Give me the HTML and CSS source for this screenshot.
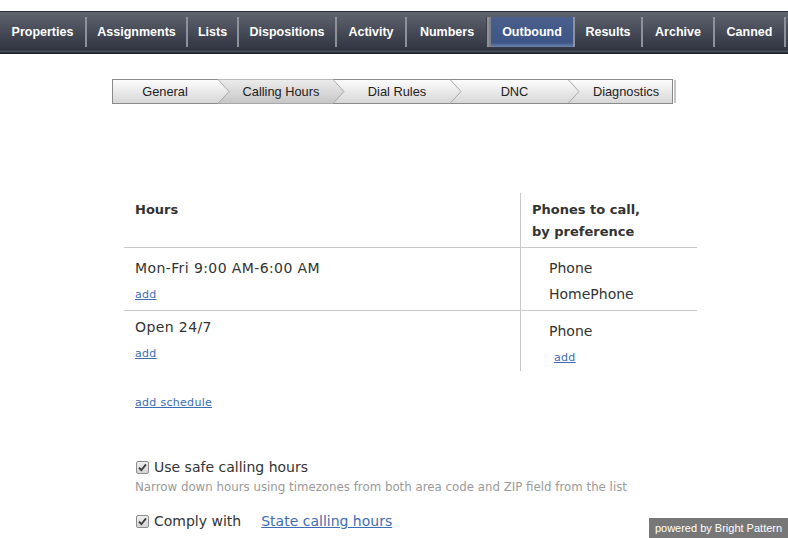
FILE: index.html
```html
<!DOCTYPE html>
<html>
<head>
<meta charset="utf-8">
<link rel="stylesheet" href="styles.css">
</head>
<body>
<div class="topnav">
  <ul class="tabs">
    <li class="tab t-prop">Properties</li>
    <li class="tab t-asg">Assignments</li>
    <li class="tab t-lists">Lists</li>
    <li class="tab t-disp">Dispositions</li>
    <li class="tab t-act">Activity</li>
    <li class="tab t-num">Numbers</li>
    <li class="tab t-out active">Outbound</li>
    <li class="tab t-res">Results</li>
    <li class="tab t-arch">Archive</li>
    <li class="tab t-can">Canned</li>
  </ul>
</div>

<div class="wizard">
  <svg class="wizard-bg" width="564" height="26" viewBox="0 0 564 26">
    <defs>
      <linearGradient id="lg" x1="0" y1="0" x2="0" y2="1">
        <stop offset="0" stop-color="#fdfdfd"/>
        <stop offset="1" stop-color="#d6d6d6"/>
      </linearGradient>
      <linearGradient id="dg" x1="0" y1="0" x2="0" y2="1">
        <stop offset="0" stop-color="#ececec"/>
        <stop offset="1" stop-color="#c6c6c6"/>
      </linearGradient>
    </defs>
    <rect x="0.5" y="0.5" width="560" height="24" fill="url(#lg)" stroke="#8a8a8a"/>
    <polygon points="106,0.5 221,0.5 232,12.5 221,24.5 106,24.5 117,12.5" fill="url(#dg)"/>
    <polyline points="106,0.5 117,12.5 106,24.5" fill="none" stroke="#a8a8a8"/>
    <polyline points="221,0.5 232,12.5 221,24.5" fill="none" stroke="#a8a8a8"/>
    <polyline points="338,0.5 349,12.5 338,24.5" fill="none" stroke="#a8a8a8"/>
    <polyline points="456,0.5 467,12.5 456,24.5" fill="none" stroke="#a8a8a8"/>
    <line x1="563" y1="1" x2="563" y2="24" stroke="#8a8a8a"/>
  </svg>
  <div class="wizard-steps">
    <span class="step s1">General</span>
    <span class="step s2">Calling Hours</span>
    <span class="step s3">Dial Rules</span>
    <span class="step s4">DNC</span>
    <span class="step s5">Diagnostics</span>
  </div>
</div>

<div class="sched">
  <div class="cell head left">Hours</div>
  <div class="cell head right">Phones to call,<br>by preference</div>

  <div class="cell row1 left">
    <div class="line spaced">Mon-Fri 9:00 AM-6:00 AM</div>
    <div class="line addline"><a class="link small" href="#">add</a></div>
  </div>
  <div class="cell row1 right body-right">
    <div class="line">Phone</div>
    <div class="line">HomePhone</div>
  </div>

  <div class="cell row2 left last">
    <div class="line spaced">Open 24/7</div>
    <div class="line addline"><a class="link small" href="#">add</a></div>
  </div>
  <div class="cell row2 right body-right last r2">
    <div class="line">Phone</div>
    <div class="line addline"><a class="link small addphone" href="#">add</a></div>
  </div>
</div>

<div class="addsched"><a class="link small" href="#">add schedule</a></div>

<div class="options">
  <div class="opt">
    <svg class="cb" width="13" height="13" viewBox="0 0 13 13">
      <defs>
        <linearGradient id="cbg" x1="0" y1="0" x2="0" y2="1">
          <stop offset="0" stop-color="#f0f0f0"/>
          <stop offset="1" stop-color="#d2d2d2"/>
        </linearGradient>
      </defs>
      <rect x="0.5" y="0.5" width="12" height="12" rx="1.5" fill="url(#cbg)" stroke="#8e8e8e"/>
      <path d="M3 6.6 L5.3 9.2 L10 3.4" fill="none" stroke="#3a3a3a" stroke-width="1.8"/>
    </svg>
    <span class="optlabel">Use safe calling hours</span>
  </div>
  <div class="hint">Narrow down hours using timezones from both area code and ZIP field from the list</div>
  <div class="opt opt2">
    <svg class="cb" width="13" height="13" viewBox="0 0 13 13">
      <rect x="0.5" y="0.5" width="12" height="12" rx="1.5" fill="url(#cbg)" stroke="#8e8e8e"/>
      <path d="M3 6.6 L5.3 9.2 L10 3.4" fill="none" stroke="#3a3a3a" stroke-width="1.8"/>
    </svg>
    <span class="optlabel">Comply with</span>
    <a class="link biglink" href="#">State calling hours</a>
  </div>
</div>

<div class="powered">powered by Bright Pattern</div>
</body>
</html>
```

FILE: styles.css
```css
html, body {
  margin: 0;
  padding: 0;
  background: #ffffff;
}

body {
  font-family: "DejaVu Sans", Verdana, sans-serif;
  color: #333333;
  width: 788px;
  height: 538px;
  overflow: hidden;
}

.topnav {
  margin-top: 11px;
  height: 41px;
  border-top: 1px solid #2b2f37;
  border-bottom: 1px solid #1c1f25;
  background: linear-gradient(#5e636e 0%, #454a56 50%, #303541 92%, #4a4e57 96%, #262a31 100%);
  display: flex;
  align-items: flex-start;
}

.tabs {
  list-style: none;
  margin: 0;
  padding: 0;
  display: flex;
  padding-top: 5px;
}

.tab {
  box-sizing: border-box;
  height: 30px;
  display: flex;
  align-items: center;
  justify-content: center;
  border-right: 2px solid #8d9198;
  color: #ffffff;
  font-family: "Liberation Sans", Arial, sans-serif;
  font-weight: bold;
  font-size: 12.5px;
  padding-bottom: 1px;
}

.t-prop { width: 87px; }
.t-asg { width: 101px; }
.t-lists { width: 51px; }
.t-disp { width: 98px; }
.t-act { width: 70px; }
.t-num { width: 82px; box-shadow: inset -1px 0 0 #3a3f4a; }
.t-out { width: 86px; }
.t-res { width: 68px; }
.t-arch { width: 72px; }
.t-can { width: 71px; }

.tab.active {
  background: linear-gradient(#4a5f8c, #3c5687 85%, #6d84b0 100%);
  border-left: 2px solid #7d828a;
}

.wizard {
  position: relative;
  margin-left: 112px;
  margin-top: 25px;
  width: 564px;
  height: 25px;
}

.wizard-bg {
  position: absolute;
  left: 0;
  top: 0;
}

.wizard-steps {
  position: relative;
  display: flex;
  gap: 11px;
  height: 25px;
  align-items: center;
  font-family: "Liberation Sans", Arial, sans-serif;
  font-size: 12.8px;
  color: #222222;
}

.step {
  text-align: center;
}

.s1 { width: 106px; }
.s2 { width: 104px; }
.s3 { width: 106px; }
.s4 { width: 107px; }
.s5 { width: 94px; }

.sched {
  margin-left: 124px;
  margin-top: 89px;
  width: 573px;
  display: grid;
  grid-template-columns: 396px 177px;
}

.cell {
  box-sizing: border-box;
  border-bottom: 1px solid #c9c9c9;
}

.cell.last {
  border-bottom: none;
}

.cell.right {
  border-left: 1px solid #c9c9c9;
}

.head {
  font-weight: bold;
  font-size: 13px;
  line-height: 22px;
  padding: 6px 0 4px 11px;
  color: #333333;
}

.line {
  font-size: 14px;
  line-height: 26px;
  height: 26px;
  white-space: nowrap;
}

.line.spaced {
  letter-spacing: 0.4px;
}

.line.addline {
  font-size: 11px;
  line-height: 28px;
}

.row1 {
  padding: 7px 0 3px 11px;
}

.row2 {
  padding: 3px 0 5px 11px;
}

.body-right {
  padding-left: 28px;
}

.r2 {
  padding-top: 7px;
  padding-bottom: 1px;
}

.link {
  color: #3e6db3;
  text-decoration: underline;
}

.small {
  font-size: 11px;
  letter-spacing: 0.3px;
}

.addphone {
  margin-left: 5px;
}

.addsched {
  margin-left: 135px;
  margin-top: 24px;
  line-height: 16px;
  height: 16px;
  font-size: 11px;
}

.options {
  margin-left: 136px;
  margin-top: 46px;
}

.opt {
  display: flex;
  align-items: center;
  height: 20px;
  font-size: 14px;
}

.cb {
  flex: none;
  margin-right: 5px;
}

.hint {
  margin-left: -1px;
  margin-top: 2px;
  font-size: 11.8px;
  line-height: 16px;
  color: #9a9a9a;
  white-space: nowrap;
}

.opt2 {
  margin-top: 16px;
}

.biglink {
  margin-left: 20px;
  font-size: 14px;
}

.powered {
  position: fixed;
  right: 0;
  bottom: 0;
  width: 139px;
  height: 20px;
  line-height: 20px;
  background: #777777;
  color: #ffffff;
  font-family: "Liberation Sans", Arial, sans-serif;
  font-size: 11px;
  text-align: center;
}
```
